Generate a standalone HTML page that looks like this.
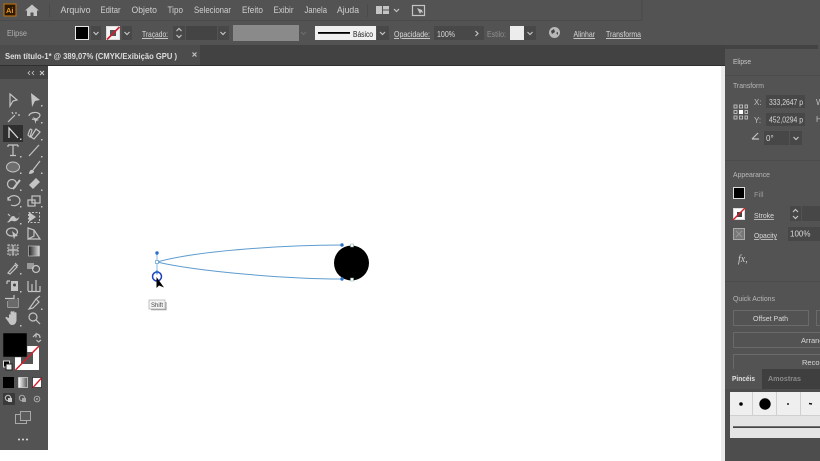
<!DOCTYPE html>
<html><head><meta charset="utf-8">
<style>
html,body{margin:0;padding:0;background:#fff;width:820px;height:461px;overflow:hidden}
svg{display:block;filter:blur(.3px)}
text{font-family:"Liberation Sans",sans-serif;font-size:8.5px;fill:#d8d8d8}
.m{font-size:9px;fill:#cfcfcf}
.i{fill:none;stroke:#c4c4c4;stroke-width:1.2}
.f{fill:#c4c4c4}
.u{text-decoration:underline}
</style></head><body>
<svg width="820" height="461" viewBox="0 0 820 461" xmlns="http://www.w3.org/2000/svg">
<rect width="820" height="461" fill="#fff"/>
<!-- top bars -->
<rect width="820" height="45" fill="#535353"/>
<path d="M0 20.5H642V0" fill="none" stroke="#4a4a4a" stroke-width="1"/>
<rect y="45" width="725" height="21" fill="#424242"/>
<rect y="45" width="200" height="21" fill="#4c4c4c"/>
<!-- logo + home -->
<rect x="4" y="4" width="12" height="12" fill="#2c1a05" stroke="#b26b12" stroke-width="1.2"/>
<text x="6" y="13" style="font-size:7.5px;font-weight:bold;fill:#e8962a">Ai</text>
<path d="M25 10.5L32 4.5L39 10.5H37V16H33.5V12.5H30.5V16H27V10.5Z" class="f"/>
<path d="M49.5 4V17" stroke="#4a4a4a"/>
<text class="m" x="60.500" y="13" textLength="30" lengthAdjust="spacingAndGlyphs">Arquivo</text>
<text class="m" x="100.500" y="13" textLength="20" lengthAdjust="spacingAndGlyphs">Editar</text>
<text class="m" x="131.500" y="13" textLength="25.500" lengthAdjust="spacingAndGlyphs">Objeto</text>
<text class="m" x="167.500" y="13" textLength="15.500" lengthAdjust="spacingAndGlyphs">Tipo</text>
<text class="m" x="194" y="13" textLength="37" lengthAdjust="spacingAndGlyphs">Selecionar</text>
<text class="m" x="242" y="13" textLength="21" lengthAdjust="spacingAndGlyphs">Efeito</text>
<text class="m" x="273.500" y="13" textLength="20" lengthAdjust="spacingAndGlyphs">Exibir</text>
<text class="m" x="304.500" y="13" textLength="22.500" lengthAdjust="spacingAndGlyphs">Janela</text>
<text class="m" x="337" y="13" textLength="22" lengthAdjust="spacingAndGlyphs">Ajuda</text>
<path d="M367.500 4V17" stroke="#4a4a4a"/>
<rect x="376" y="6" width="6" height="8" class="f"/><rect x="383" y="6" width="6" height="3.500" class="f"/><rect x="383" y="10.500" width="6" height="3.500" class="f"/>
<path d="M394 9l2.500 2.500L399 9" class="i"/>
<rect x="412.500" y="5.500" width="12" height="10" class="i"/>
<path d="M417 8l3 6 1-2 2 1-1-3z" class="f"/>
<!-- options bar -->
<text x="7" y="36" style="fill:#b0b0b0;font-size:8px" textLength="20" lengthAdjust="spacingAndGlyphs">Elipse</text>
<rect x="75.500" y="26.500" width="13" height="13" fill="#000" stroke="#e8e8e8"/>
<rect x="91" y="26" width="10" height="14" fill="#484848"/>
<path d="M93.500 32l2.500 2.500 2.500-2.500" class="i"/>
<rect x="106.500" y="26.500" width="13" height="13" fill="#f4f4f4" stroke="#ddd"/>
<rect x="110" y="30" width="6" height="6" fill="#555"/>
<path d="M107 39.500L119.500 27" stroke="#cf1f2e" stroke-width="1.6"/>
<rect x="122" y="26" width="10" height="14" fill="#484848"/>
<path d="M124.500 32l2.500 2.500 2.500-2.500" class="i"/>
<text x="142" y="37" class="u" textLength="26" lengthAdjust="spacingAndGlyphs">Traçado:</text>
<rect x="173" y="26" width="12" height="14" fill="#484848"/>
<path d="M176.500 31l2.500-2.500 2.500 2.500M176.500 35l2.500 2.500 2.500-2.500" class="i"/>
<rect x="186" y="26" width="31" height="14" fill="#444"/>
<rect x="218" y="26" width="11" height="14" fill="#484848"/>
<path d="M218.500 32l2.500 2.500 2.500-2.500" class="i" transform="translate(2 0)"/>
<rect x="233" y="25" width="66" height="16" fill="#8a8a8a"/>
<path d="M301 32l2.500 2.500 2.500-2.500" fill="none" stroke="#6e6e6e"/>
<rect x="315" y="26" width="61" height="14" fill="#f0f0f0"/>
<rect x="318" y="32" width="32" height="1.800" fill="#000"/>
<text x="353" y="37" style="fill:#222;font-size:8px" textLength="20" lengthAdjust="spacingAndGlyphs">Básico</text>
<rect x="377" y="26" width="12" height="14" fill="#484848"/>
<path d="M380 32l2.500 2.500 2.500-2.500" class="i"/>
<text x="394" y="37" class="u" textLength="36" lengthAdjust="spacingAndGlyphs">Opacidade:</text>
<rect x="434" y="26" width="38" height="14" fill="#484848"/>
<text x="437" y="37" textLength="18" lengthAdjust="spacingAndGlyphs">100%</text>
<rect x="472" y="26" width="12" height="14" fill="#484848"/>
<path d="M475.500 31l2.500 2.500-2.500 2.500" class="i"/>
<text x="487" y="37" style="fill:#8f8f8f" textLength="19" lengthAdjust="spacingAndGlyphs">Estilo:</text>
<rect x="510" y="26" width="14" height="14" fill="#ececec"/>
<rect x="524" y="26" width="12" height="14" fill="#484848"/>
<path d="M527.500 32l2.500 2.500 2.500-2.500" class="i"/>
<circle cx="554.500" cy="32.500" r="5.500" fill="#b8b8b8"/><path d="M551 31l3-2 1 3-3 2zM556 33l2-1v3z" fill="#444"/>
<text x="573.500" y="37" class="u" textLength="21.500" lengthAdjust="spacingAndGlyphs">Alinhar</text>
<text x="606" y="37" class="u" textLength="35" lengthAdjust="spacingAndGlyphs">Transforma</text>
<!-- tab -->
<text x="5" y="59" style="font-weight:bold;fill:#dedede" textLength="172" lengthAdjust="spacingAndGlyphs">Sem título-1* @ 389,07% (CMYK/Exibição GPU )</text>
<path d="M192.500 52.500l4 4M196.500 52.500l-4 4" class="i"/>
<rect y="65" width="725" height="1" fill="#2f2f2f"/>
<!-- toolbar -->
<rect y="66" width="48" height="384" fill="#535353"/>
<rect y="66" width="48" height="13" fill="#434343"/>
<path d="M30 71l-2 2 2 2M34 71l-2 2 2 2" fill="none" stroke="#c8c8c8" stroke-width=".8"/>
<path d="M40 71l4 4M44 71l-4 4" fill="none" stroke="#d0d0d0"/>
<rect x="3" y="125" width="20" height="17" fill="#2f2f2f"/>
<!-- selection -->
<path d="M10 94L17 100L13 101L10 106Z" class="i"/>
<path d="M31 93L40 100L35 101L32 107Z" class="f"/><rect x="41" y="105" width="1.500" height="1.500" class="f"/>
<!-- wand / lasso -->
<path d="M8 122L15 115" class="i" stroke-width="2"/><path d="M16 112v2M18 115h2M12 112l1 2" class="i"/>
<path d="M29 116c0-4 10-5 11-1 0 3-5 5-8 4" class="i"/><path d="M33 117l6 3-3 1 0 3z" class="f"/><rect x="41" y="122" width="1.500" height="1.500" class="f"/>
<!-- pen -->
<path d="M9 138V128L18 138" fill="none" stroke="#e0e0e0" stroke-width="1.200"/><rect x="20" y="138.500" width="1.500" height="1.500" class="f"/>
<path d="M28 135c2-6 2-7 4-5l-2 7zM31 137l5-8 4 3-6 7z" class="i"/><rect x="41" y="139" width="1.500" height="1.500" class="f"/>
<!-- T / line -->
<path d="M8 145H18M13 145V155M10 155.500H16M8 145v2M18 145v2" class="i" stroke-width="1.500"/><rect x="20" y="156" width="1.500" height="1.500" class="f"/>
<path d="M29 156L39 145" class="i"/><rect x="41" y="156" width="1.500" height="1.500" class="f"/>
<!-- ellipse / brush -->
<ellipse cx="13" cy="167" rx="6.500" ry="5" fill="#6e6e6e" stroke="#c4c4c4"/><rect x="20" y="172.500" width="1.500" height="1.500" class="f"/>
<path d="M40 161L33 170" class="i" stroke-width="2"/><path d="M29 174c0-3 2-5 4-4s1 4-4 4z" class="f"/><rect x="41" y="172.500" width="1.500" height="1.500" class="f"/>
<!-- shaper / eraser -->
<circle cx="12" cy="184" r="4.500" class="i"/><path d="M13 189L20 180" stroke="#c4c4c4" stroke-width="2"/><rect x="20" y="189.500" width="1.500" height="1.500" class="f"/>
<path d="M29 185L36 178L40 182L33 189Z" class="f"/><rect x="41" y="189.500" width="1.500" height="1.500" class="f"/>
<!-- rotate / scale -->
<path d="M8 200a6 5 0 1 1 3 5M8 197v3h3" class="i"/><rect x="20" y="206" width="1.500" height="1.500" class="f"/>
<rect x="28" y="200" width="7" height="6" class="i"/><rect x="32" y="196" width="8" height="7" class="i"/><rect x="41" y="206" width="1.500" height="1.500" class="f"/>
<!-- warp / free transform -->
<path d="M7 222c3-1 3-6 6-6s2 4 5 2 0-5 1-5c1 3 0 7-3 8s-3-1-5 0-2 2-4 1z" class="f"/><path d="M8 214l2 2" class="i"/><rect x="20" y="223" width="1.500" height="1.500" class="f"/>
<rect x="28.500" y="212.500" width="11" height="10" fill="none" stroke="#c4c4c4" stroke-dasharray="2 1.500"/><path d="M29 212l7 5-7 5z" class="f"/>
<!-- shape builder / perspective -->
<ellipse cx="12" cy="232" rx="5.500" ry="4" class="i"/><path d="M12 231l6 5-3 .5-1 3z" class="f"/>
<path d="M28 228l6 2v6l-6 3zM34 230l6 9H28" class="i"/>
<!-- mesh / gradient -->
<rect x="8" y="245" width="10" height="10" fill="#6a6a6a" stroke="#c4c4c4" stroke-dasharray="2 1"/><path d="M8 250h10M13 245v10" class="i" stroke-width=".7"/>
<defs><linearGradient id="g"><stop offset="0" stop-color="#222"/><stop offset="1" stop-color="#ddd"/></linearGradient></defs>
<rect x="28.500" y="246" width="11" height="10" fill="url(#g)" stroke="#bdbdbd" stroke-width=".7"/>
<!-- eyedropper / blend -->
<path d="M8 273L15 265L17 267L10 274ZM15 263l3 3" class="i"/><rect x="20" y="273" width="1.500" height="1.500" class="f"/>
<rect x="27" y="263" width="7" height="6" fill="#999"/><circle cx="36" cy="269" r="3.500" class="i"/>
<!-- symbol / graph -->
<path d="M7 281h3M7 281v3" class="i"/><rect x="11" y="281" width="7" height="10" class="f"/><circle cx="14.500" cy="285" r="1.500" fill="#444"/><rect x="20" y="291" width="1.500" height="1.500" class="f"/>
<path d="M28 291V281M32 291V284M36 291V280M40 291V286M28 291.500H40.500" class="i" stroke-width="1.400"/>
<!-- artboard / slice -->
<path d="M5 298.500H14V295M8 301V307H18V298" class="i"/><rect x="8" y="299" width="10" height="8" fill="#6a6a6a"/>
<path d="M29 309L36 299L39 302L33 308Z" class="i"/><path d="M36 299l4-3" class="i"/><rect x="41" y="308.500" width="1.500" height="1.500" class="f"/>
<!-- hand / zoom -->
<path d="M9 318v-3c0-1 1.500-1 1.500 0v2-5c0-1 2-1 2 0v4-4c0-1 2-1 2 0v4-3c0-1 2-1 2 0v7c0 3-2 5-4 5s-3-1-4-3l-3-4c-.5-1 1-1.500 2-.5z" class="f"/><rect x="20" y="325" width="1.500" height="1.500" class="f"/>
<circle cx="33" cy="317" r="4" class="i"/><path d="M36 320l4 4" class="i" stroke-width="1.600"/>
<!-- colors -->
<rect x="15" y="346" width="24" height="24" fill="#fff"/>
<rect x="21" y="352" width="12" height="12" fill="#555"/>
<path d="M15.500 370L39 346" stroke="#d3222c" stroke-width="1.500"/>
<rect x="3" y="333" width="24" height="24" fill="#000" stroke="#555" stroke-width=".5"/>
<path d="M36 334c2 0 4 1 4 4M33 337l3-3 0 3.500M41 340l-2.500 2-2-2" class="i"/>
<rect x="3.500" y="361" width="6" height="6" fill="#000" stroke="#ddd"/><rect x="6" y="364" width="6" height="6" fill="#eee" stroke="#222"/>
<rect x="3" y="377" width="11" height="11" fill="#000"/>
<defs><linearGradient id="h"><stop offset="0" stop-color="#fff"/><stop offset="1" stop-color="#555"/></linearGradient></defs>
<rect x="18.500" y="377.500" width="9" height="10" fill="url(#h)" stroke="#ddd" stroke-width=".7"/>
<rect x="32.500" y="377.500" width="9" height="10" fill="#fff" stroke="#222" stroke-width=".7"/><path d="M33 387.500L41.500 378" stroke="#d3222c" stroke-width="1.400"/>
<rect x="3" y="393" width="12" height="12" fill="#3a3a3a"/>
<circle cx="8" cy="398" r="2.700" fill="none" stroke="#c8c8c8"/><rect x="8" y="398" width="4" height="4" fill="#c8c8c8"/>
<circle cx="22" cy="398" r="2.700" fill="none" stroke="#a8a8a8"/><rect x="22" y="398" width="4" height="4" fill="#a8a8a8"/>
<circle cx="37" cy="399" r="2.800" fill="none" stroke="#a8a8a8"/><circle cx="37" cy="399" r="1" fill="#a8a8a8"/>
<rect x="15.500" y="414.500" width="11" height="9" fill="none" stroke="#a8a8a8"/><rect x="20.500" y="411.500" width="10" height="9" fill="#5c5c5c" stroke="#a8a8a8"/>
<circle cx="19" cy="439.500" r="1" fill="#e0e0e0"/><circle cx="23" cy="439.500" r="1" fill="#e0e0e0"/><circle cx="27" cy="439.500" r="1" fill="#e0e0e0"/>
<!-- canvas art -->
<path d="M157 262C200 250 290 245 342 245M157 262C200 272 290 279 342 279" fill="none" stroke="#5f9ccf" stroke-width="1"/>
<path d="M157 254V275" stroke="#8ab8e0" stroke-width="1"/>
<circle cx="351.500" cy="263" r="17.500" fill="#000"/>
<circle cx="157" cy="253" r="1.700" fill="#2a6fc8"/>
<rect x="155.500" y="260.500" width="3" height="3" fill="#fff" stroke="#5f9ccf" stroke-width=".7"/>
<circle cx="157" cy="276.500" r="4.500" fill="none" stroke="#1d3fc0" stroke-width="1.500"/>
<circle cx="157" cy="272" r="1.500" fill="#2a6fc8"/>
<path d="M156.500 277L156.500 288L159 285.500L164 287.500Z" fill="#000"/>
<circle cx="342" cy="245" r="1.700" fill="#2a6fc8"/><circle cx="342" cy="279" r="1.700" fill="#2a6fc8"/>
<rect x="350.500" y="244" width="3" height="3" fill="#fff" stroke="#8aa" stroke-width=".5"/>
<rect x="350.500" y="278" width="3" height="3" fill="#fff" stroke="#8aa" stroke-width=".5"/>
<rect x="149" y="300" width="16" height="9" fill="#f4f4f4" stroke="#aaa" stroke-width=".7"/>
<path d="M151 309.700H166V302" fill="none" stroke="#999" stroke-width="1"/>
<text x="151" y="307" style="font-size:6px;fill:#444">Shift</text>
<!-- right panel -->
<rect x="721" y="66" width="4" height="395" fill="#d8d8d8" opacity=".5"/>
<rect x="725" y="45" width="95" height="416" fill="#535353"/>
<rect x="725" y="45" width="93" height="4" fill="#434343"/>
<text x="733" y="64" style="font-size:7.500px;fill:#c8c8c8" textLength="18" lengthAdjust="spacingAndGlyphs">Elipse</text>
<path d="M725 75.500H820" stroke="#4c4c4c"/>
<text x="733" y="88" style="font-size:7.500px;fill:#b8b8b8" textLength="31" lengthAdjust="spacingAndGlyphs">Transform</text>
<g fill="none" stroke="#c4c4c4" stroke-width=".9">
<rect x="734" y="105" width="3" height="3"/><rect x="739.500" y="105" width="3" height="3"/><rect x="745" y="105" width="2.500" height="3"/>
<rect x="734" y="110.500" width="3" height="3"/><rect x="745" y="110.500" width="2.500" height="3"/>
<rect x="734" y="116" width="3" height="3"/><rect x="739.500" y="116" width="3" height="3"/><rect x="745" y="116" width="2.500" height="3"/>
</g>
<rect x="739" y="110" width="4" height="4" fill="#fff"/>
<text x="754" y="105" style="fill:#c0c0c0;font-size:8px">X:</text>
<text x="754" y="123" style="fill:#c0c0c0;font-size:8px">Y:</text>
<rect x="766" y="95" width="39" height="13" fill="#474747"/>
<rect x="766" y="113" width="39" height="13" fill="#474747"/>
<text x="769" y="105" style="font-size:8px" textLength="34" lengthAdjust="spacingAndGlyphs">333,2647 p</text>
<text x="769" y="122.500" style="font-size:8px" textLength="34" lengthAdjust="spacingAndGlyphs">452,0294 p</text>
<text x="816" y="105" style="fill:#c0c0c0;font-size:8px">W</text>
<text x="816" y="122" style="fill:#c0c0c0;font-size:8px">H</text>
<path d="M752 139L758 133M752 139H759" class="i"/>
<rect x="764" y="131" width="25" height="14" fill="#474747"/>
<rect x="790" y="131" width="12" height="14" fill="#474747"/>
<path d="M793.500 137l2.500 2.500 2.500-2.500" class="i"/>
<text x="766" y="141" style="font-size:8px">0°</text>
<path d="M725 160.500H820" stroke="#4c4c4c"/>
<text x="733" y="177" style="font-size:7.500px;fill:#b8b8b8" textLength="37" lengthAdjust="spacingAndGlyphs">Appearance</text>
<rect x="733.500" y="187.500" width="11" height="11" fill="#000" stroke="#ddd"/>
<text x="754" y="197" style="fill:#9a9a9a;font-size:7.500px">Fill</text>
<rect x="733.500" y="208.500" width="11" height="11" fill="#fff" stroke="#ddd"/>
<rect x="737" y="212" width="5" height="5" fill="#444"/>
<path d="M733 220L745 208" stroke="#d3222c" stroke-width="1.500"/>
<text x="754" y="218" class="u" style="font-size:7.500px" textLength="20" lengthAdjust="spacingAndGlyphs">Stroke</text>
<rect x="790" y="206" width="11" height="15" fill="#474747"/>
<path d="M793 212l2.500-2.500 2.500 2.500M793 216l2.500 2.500 2.500-2.500" class="i"/>
<rect x="802" y="206" width="18" height="15" fill="#474747"/>
<rect x="733.500" y="228.500" width="11" height="11" fill="#777" stroke="#aaa"/>
<path d="M736 231l6 6M742 231l-6 6" stroke="#999" stroke-width="1"/>
<text x="754" y="238" class="u" style="font-size:7.500px" textLength="23" lengthAdjust="spacingAndGlyphs">Opacity</text>
<rect x="788" y="227" width="32" height="14" fill="#474747"/>
<text x="790" y="236.500" style="font-size:8px">100%</text>
<text x="738" y="262" style="font-family:'Liberation Serif',serif;font-style:italic;font-size:10px;fill:#cfcfcf">fx,</text>
<path d="M725 281.500H820" stroke="#4c4c4c"/>
<text x="733" y="301" style="font-size:7.500px;fill:#b8b8b8" textLength="42" lengthAdjust="spacingAndGlyphs">Quick Actions</text>
<rect x="733.500" y="310.500" width="75" height="15" fill="none" stroke="#6a6a6a"/>
<rect x="816.500" y="310.500" width="10" height="15" fill="none" stroke="#6a6a6a"/>
<text x="753" y="321" style="font-size:7.500px" textLength="35" lengthAdjust="spacingAndGlyphs">Offset Path</text>
<rect x="733.500" y="332.500" width="100" height="15" fill="none" stroke="#6a6a6a"/>
<text x="801" y="343" style="font-size:7.500px">Arrange</text>
<rect x="733.500" y="354.500" width="100" height="15" fill="none" stroke="#6a6a6a"/>
<text x="802" y="365" style="font-size:7.500px">Recolor</text>
<!-- brushes -->
<rect x="725" y="369" width="95" height="92" fill="#4d4d4d"/>
<rect x="725" y="369" width="95" height="20" fill="#3f3f3f"/>
<rect x="725" y="369" width="37" height="20" fill="#535353"/>
<text x="732" y="381" style="font-size:7.500px;font-weight:bold;fill:#e0e0e0" textLength="23" lengthAdjust="spacingAndGlyphs">Pincéis</text>
<text x="768" y="381" style="font-size:7.500px;font-weight:bold;fill:#8a8a8a" textLength="33" lengthAdjust="spacingAndGlyphs">Amostras</text>
<rect x="730" y="392" width="90" height="46" fill="#d0d0d0"/>
<rect x="730" y="392" width="22" height="23" fill="#efefef"/>
<rect x="753" y="392" width="23" height="23" fill="#efefef"/>
<rect x="777" y="392" width="23" height="23" fill="#efefef"/>
<rect x="801" y="392" width="19" height="23" fill="#efefef"/>
<rect x="730" y="416" width="90" height="22" fill="#e4e4e4"/>
<circle cx="741" cy="404" r="1.800" fill="#000"/>
<circle cx="765" cy="404" r="5.700" fill="#000"/>
<circle cx="788" cy="404" r="1" fill="#222"/>
<path d="M809 403.500l3 .5" stroke="#111" stroke-width="1.500"/>
<rect x="733" y="426.500" width="87" height="1.200" fill="#000"/>
</svg>
</body></html>
